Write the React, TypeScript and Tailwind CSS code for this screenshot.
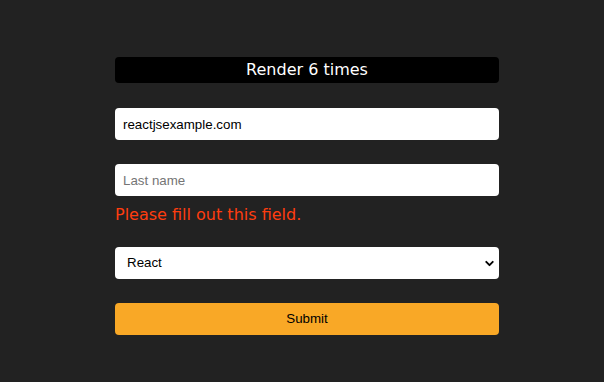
import { ChevronDown } from 'lucide-react';

export default function App() {
  return (
    <div className="min-h-[382px] w-full bg-[#222222] pt-[57px]">
      <form className="ml-[115px] flex w-[384px] flex-col" onSubmit={(e) => e.preventDefault()}>
        <h1 className="flex h-[26px] items-center justify-center rounded-[4px] bg-black font-['DejaVu_Sans',sans-serif] text-[16px] text-white">
          Render 6 times
        </h1>

        <input
          className="mt-[25px] h-[32px] rounded-[4px] bg-white px-[8px] font-['Liberation_Sans',Arial,sans-serif] text-[13.33px] text-black outline-none"
          defaultValue="reactjsexample.com"
        />

        <input
          className="mt-[24px] h-[32px] rounded-[4px] bg-white px-[8px] font-['Liberation_Sans',Arial,sans-serif] text-[13.33px] text-black outline-none placeholder:text-[#757575]"
          placeholder="Last name"
        />
        <p className="mt-[7px] h-[24px] font-['DejaVu_Sans',sans-serif] text-[16px] leading-[24px] text-[#ff3d0f]">
          Please fill out this field.
        </p>

        {/* select with own chevron so it renders the same everywhere */}
        <div className="relative mt-[20px]">
          <select
            className="h-[32px] w-full appearance-none rounded-[4px] bg-white pl-[12px] font-['Liberation_Sans',Arial,sans-serif] text-[13.33px] text-black outline-none"
            defaultValue="react"
          >
            <option value="react">React</option>
            <option value="vue">Vue</option>
            <option value="angular">Angular</option>
          </select>
          <ChevronDown className="pointer-events-none absolute right-[3px] top-[10px] h-[13px] w-[13px] text-black" strokeWidth={3.5} />
        </div>

        <button
          type="submit"
          className="mt-[24px] h-[32px] rounded-[4px] bg-[#f9a826] font-['Liberation_Sans',Arial,sans-serif] text-[13.33px] text-black"
        >
          Submit
        </button>
      </form>
    </div>
  );
}
